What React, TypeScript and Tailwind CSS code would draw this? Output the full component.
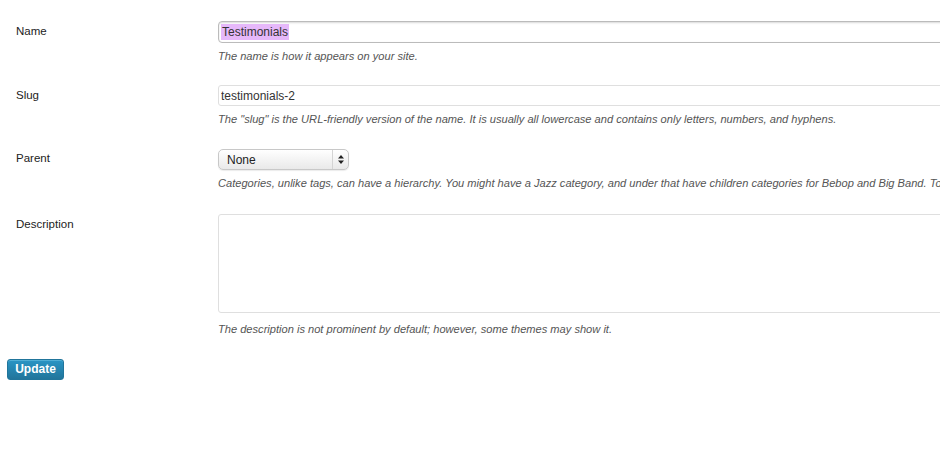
import { useState } from 'react'

const font = { fontFamily: '"Liberation Sans", Arial, sans-serif' }

function Row({ label, labelTop, children }: { label: string; labelTop: string; children: React.ReactNode }) {
  return (
    <div className="flex">
      <div className={`w-[218px] shrink-0 pl-4 text-[11.5px] leading-4 text-[#222] ${labelTop}`}>{label}</div>
      <div className="flex-1">{children}</div>
    </div>
  )
}

function Hint({ children, top = 'mt-[5px]' }: { children: React.ReactNode; top?: string }) {
  return <p className={`${top} whitespace-nowrap text-[11.1px] italic leading-4 text-[#555]`}>{children}</p>
}

export default function App() {
  const [slug, setSlug] = useState('testimonials-2')
  const [desc, setDesc] = useState('')

  return (
    <div className="h-[475px] w-[940px] overflow-hidden bg-white" style={font}>
      <div className="w-[1300px] pt-[21px]">
        <Row label="Name" labelTop="pt-[2px]">
          <div className="flex h-[22px] items-center rounded-[4px] border border-[#bbb] bg-white px-[2px] text-[12px] text-[#333] shadow-[inset_0_1px_2px_rgba(0,0,0,0.15)]">
            <span className="bg-[#e6b8fa] px-[1px] leading-4">Testimonials</span>
          </div>
          <Hint>The name is how it appears on your site.</Hint>
        </Row>

        <div className="mt-[21px]">
          <Row label="Slug" labelTop="pt-[2px]">
            <input
              value={slug}
              onChange={(e) => setSlug(e.target.value)}
              className="block h-[21px] w-full rounded-[3px] border border-[#dfdfdf] bg-white px-[2px] text-[12px] text-[#333] outline-none"
            />
            <Hint>The "slug" is the URL-friendly version of the name. It is usually all lowercase and contains only letters, numbers, and hyphens.</Hint>
          </Row>
        </div>

        <div className="mt-[22px]">
          <Row label="Parent" labelTop="pt-[1px]">
            <div className="flex h-[21px] w-[131px] items-center justify-between rounded-[5px] border border-[#c8c8c8] bg-gradient-to-b from-white to-[#e9e9e9] text-[12px] text-[#222] shadow-[0_1px_1px_rgba(0,0,0,0.08)]">
              <span className="pl-[8px]">None</span>
              <span className="flex h-full w-[16px] flex-col items-center justify-center border-l border-[#d4d4d4]">
                <svg width="6" height="9" viewBox="0 0 6 9">
                  <path d="M3 0L6 3.5H0z M3 9L6 5.5H0z" fill="#222" />
                </svg>
              </span>
            </div>
            <Hint>Categories, unlike tags, can have a hierarchy. You might have a Jazz category, and under that have children categories for Bebop and Big Band. Totally optional.</Hint>
          </Row>
        </div>

        <div className="mt-[23px]">
          <Row label="Description" labelTop="pt-[2px]">
            <textarea
              value={desc}
              onChange={(e) => setDesc(e.target.value)}
              className="block h-[99px] w-full resize-none rounded-[3px] border border-[#dfdfdf] bg-white outline-none"
            />
            <Hint top="mt-[8px]">The description is not prominent by default; however, some themes may show it.</Hint>
          </Row>
        </div>

        <div className="mt-[19px] pl-[7px]">
          <button className="h-[21px] w-[57px] rounded-[3px] border border-[#21759b] bg-gradient-to-b from-[#2a95c5] to-[#21759b] text-[12px] font-bold text-white shadow-[inset_0_1px_0_rgba(120,200,230,0.5)]">
            Update
          </button>
        </div>
      </div>
    </div>
  )
}
